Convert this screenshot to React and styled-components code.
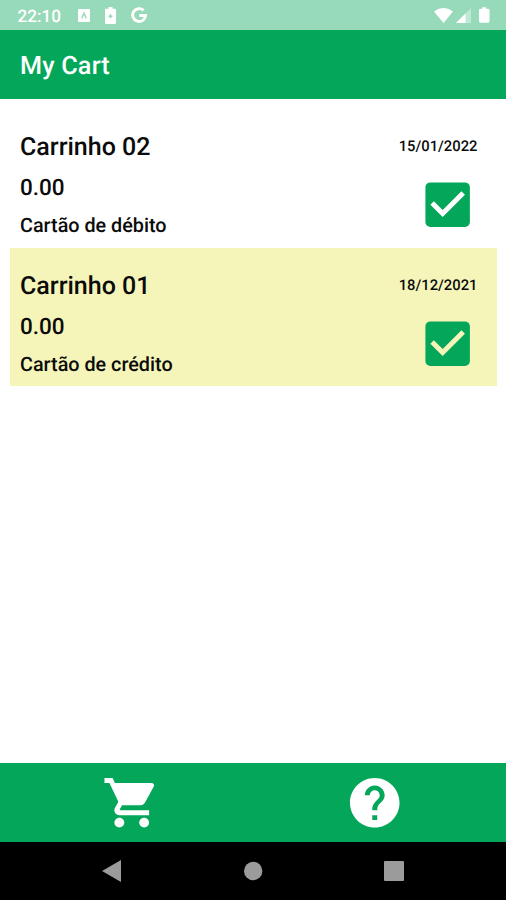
import React from 'react'
import styled, { createGlobalStyle } from 'styled-components'
import { MdShoppingCart, MdHelp, MdCheckBox } from 'react-icons/md'

const GlobalStyle = createGlobalStyle`
  * {
    box-sizing: border-box;
  }
  body {
    margin: 0;
    background-color: #ffffff;
    font-family: Roboto, sans-serif;
    font-weight: 500;
    text-rendering: geometricPrecision;
  }
  svg {
    display: block;
  }
`

const Screen = styled.div`
  display: flex;
  flex-direction: column;
  width: 506px;
  height: 900px;
`

const StatusBar = styled.div`
  display: flex;
  align-items: center;
  justify-content: space-between;
  height: 30px;
  padding: 0 16.5px 0 17.5px;
  background-color: #97dab9;
  color: #ffffff;
`

const StatusGroup = styled.div`
  display: flex;
  align-items: center;
  gap: ${props => props.$gap}px;
`

const Clock = styled.span`
  width: 45px;
  padding-top: 3px;
  font-size: 17.2px;
  line-height: 20px;
`

const Header = styled.header`
  height: 69px;
  padding: 0 20px;
  background-color: #04a75a;
  color: #ffffff;
  font-size: 25.2px;
  line-height: 73px;
  letter-spacing: 0.2px;
`

const List = styled.main`
  flex: 1;
  padding: 10px 10px 0;
`

const Cart = styled.div`
  display: flex;
  justify-content: space-between;
  width: 486.5px;
  height: 138.6px;
  padding: 19px 19px 0 10px;
  background-color: ${props => (props.$highlighted ? '#f5f5b9' : '#ffffff')};
  color: #0b0b0b;
`

const Info = styled.div`
  display: flex;
  flex-direction: column;
  padding-top: 1px;
`

const Name = styled.div`
  font-size: 25px;
  line-height: 37px;
`

const Price = styled.div`
  margin-top: 7px;
  font-size: 22.5px;
  line-height: 30px;
`

const Payment = styled.div`
  margin-top: 9px;
  font-size: 19.8px;
  line-height: 28px;
`

const Side = styled.div`
  display: flex;
  flex-direction: column;
  align-items: flex-end;
  color: #04a75a;
`

const CartDate = styled.div`
  margin-bottom: 11px;
  color: #0b0b0b;
  font-size: 14.8px;
  line-height: 36px;
`

const TabBar = styled.nav`
  display: flex;
  align-items: center;
  justify-content: space-around;
  height: 78.5px;
  padding: 0 10px;
  background-color: #04a75a;
  color: #ffffff;
`

const NavigationBar = styled.div`
  display: flex;
  align-items: center;
  justify-content: center;
  gap: 121px;
  height: 58.5px;
  background-color: #000000;
  color: #9b9b9b;
`

const carts = [
  {
    name: 'Carrinho 02',
    price: '0.00',
    payment: 'Cartão de débito',
    date: '15/01/2022',
  },
  {
    name: 'Carrinho 01',
    price: '0.00',
    payment: 'Cartão de crédito',
    date: '18/12/2021',
    highlighted: true,
  },
]

const KeyboardIcon = () => (
  <svg width="12" height="13" viewBox="0 0 12 13" fill="none">
    <rect width="12" height="13" rx="1" fill="currentColor" />
    <path d="M3.7 9.3 6 4.2l2.3 5.1" stroke="#97dab9" strokeWidth="1.5" />
  </svg>
)

const BatterySaverIcon = () => (
  <svg width="11" height="17" viewBox="0 0 11 17">
    <path
      d="M3.5 0h4v1.8H10a1 1 0 0 1 1 1V16a1 1 0 0 1-1 1H1a1 1 0 0 1-1-1V2.8a1 1 0 0 1 1-1h2.5z"
      fill="currentColor"
    />
    <path d="M5.5 7.2v4M3.5 9.2h4" stroke="#97dab9" strokeWidth="1.6" />
  </svg>
)

const GoogleIcon = () => (
  <svg width="16" height="16" viewBox="0 0 16 16" fill="none">
    <path
      d="M12.5 3.4A6.4 6.4 0 1 0 14.5 8.5H8.3"
      stroke="currentColor"
      strokeWidth="2.9"
    />
  </svg>
)

const WifiIcon = () => (
  <svg width="19" height="15" viewBox="0 0 19 15">
    <path d="M0 3.4Q9.5-3.4 19 3.4L9.5 15z" fill="currentColor" />
  </svg>
)

const SignalIcon = () => (
  <svg width="15" height="15" viewBox="0 0 15 15">
    <path d="M0 15 15 0v15z" fill="currentColor" opacity="0.4" />
    <path d="M0 15 9.5 5.5V15z" fill="currentColor" />
  </svg>
)

const BatteryIcon = () => (
  <svg width="10.5" height="16" viewBox="0 0 11 16">
    <path
      d="M3.5 0h4v1.5H9.5A1.5 1.5 0 0 1 11 3v11.5a1.5 1.5 0 0 1-1.5 1.5h-8A1.5 1.5 0 0 1 0 14.5V3a1.5 1.5 0 0 1 1.5-1.5h2z"
      fill="currentColor"
    />
  </svg>
)

const CartItem = ({ cart }) => (
  <Cart $highlighted={cart.highlighted}>
    <Info>
      <Name>{cart.name}</Name>
      <Price>{cart.price}</Price>
      <Payment>{cart.payment}</Payment>
    </Info>
    <Side>
      <CartDate>{cart.date}</CartDate>
      <MdCheckBox size={59.3} />
    </Side>
  </Cart>
)

const App = () => (
  <>
    <GlobalStyle />
    <Screen>
      <StatusBar>
        <StatusGroup $gap={15}>
          <Clock>22:10</Clock>
          <KeyboardIcon />
          <BatterySaverIcon />
          <GoogleIcon />
        </StatusGroup>
        <StatusGroup $gap={8.5}>
          <StatusGroup $gap={2.5}>
            <WifiIcon />
            <SignalIcon />
          </StatusGroup>
          <BatteryIcon />
        </StatusGroup>
      </StatusBar>
      <Header>My Cart</Header>
      <List>
        {carts.map(cart => (
          <CartItem key={cart.name} cart={cart} />
        ))}
      </List>
      <TabBar>
        <MdShoppingCart size={59.5} />
        <MdHelp size={59.5} />
      </TabBar>
      <NavigationBar>
        <svg width="19" height="22" viewBox="0 0 19 22">
          <path d="M19 0v22L0 11z" fill="currentColor" />
        </svg>
        <svg width="21" height="20" viewBox="0 0 21 20">
          <circle cx="11.2" cy="10" r="9.2" fill="currentColor" />
        </svg>
        <svg width="20" height="20" viewBox="0 0 20 20">
          <rect width="20" height="20" rx="1" fill="currentColor" />
        </svg>
      </NavigationBar>
    </Screen>
  </>
)

export default App
